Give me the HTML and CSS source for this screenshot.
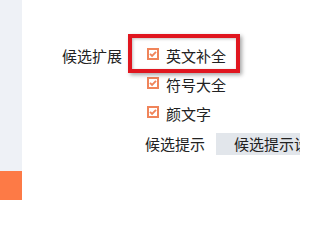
FILE: index.html
```html
<!DOCTYPE html>
<html lang="zh">
<head>
<meta charset="utf-8">
<link rel="stylesheet" href="styles.css">
</head>
<body>
<div class="page">
  <aside class="sidebar">
    <div class="sidebar-fill"></div>
    <div class="sidebar-active"></div>
  </aside>
  <main class="main">
    <div class="row">
      <span class="label">候选扩展</span>
      <span class="check"><svg width="12" height="12" viewBox="0 0 12 12"><rect x="1" y="1" width="10" height="10" fill="#fff" stroke="#f0845a" stroke-width="2"/><polyline points="3,5.8 5.1,7.9 9,3.9" fill="none" stroke="#f0845a" stroke-width="1.9"/></svg></span>
      <span class="text">英文补全</span>
    </div>
    <div class="row indent">
      <span class="check"><svg width="12" height="12" viewBox="0 0 12 12"><rect x="1" y="1" width="10" height="10" fill="#fff" stroke="#f0845a" stroke-width="2"/><polyline points="3,5.8 5.1,7.9 9,3.9" fill="none" stroke="#f0845a" stroke-width="1.9"/></svg></span>
      <span class="text">符号大全</span>
    </div>
    <div class="row indent">
      <span class="check"><svg width="12" height="12" viewBox="0 0 12 12"><rect x="1" y="1" width="10" height="10" fill="#fff" stroke="#f0845a" stroke-width="2"/><polyline points="3,5.8 5.1,7.9 9,3.9" fill="none" stroke="#f0845a" stroke-width="1.9"/></svg></span>
      <span class="text">颜文字</span>
    </div>
    <div class="row hint-row">
      <span class="hint-label">候选提示</span>
      <span class="button">候选提示设置</span>
    </div>
    <div class="highlight"></div>
  </main>
</div>
</body>
</html>
```

FILE: styles.css
```css
html, body {
  margin: 0;
  padding: 0;
  width: 300px;
  height: 200px;
  overflow: hidden;
  background: #ffffff;
}

.page {
  display: flex;
  width: 300px;
  height: 200px;
  font-family: "Noto Sans CJK SC", "Noto Sans", sans-serif;
  font-size: 15px;
  color: #222222;
}

.sidebar {
  width: 22px;
  flex: none;
  display: flex;
  flex-direction: column;
  background: #eef1f6;
}

.sidebar-fill {
  flex: 1;
}

.sidebar-active {
  height: 29px;
  background: #fd7a46;
}

.main {
  position: relative;
  flex: 1;
  min-width: 0;
  overflow: hidden;
  padding: 41px 0 0 40px;
  white-space: nowrap;
}

.row {
  display: flex;
  align-items: center;
  height: 29px;
}

.label {
  width: 85px;
  line-height: 29px;
}

.indent {
  padding-left: 85px;
}

.check {
  display: flex;
  width: 12px;
  height: 12px;
  margin-bottom: 3px;
}

.text {
  margin-left: 7px;
  line-height: 29px;
}

.hint-row {
  margin-top: 5px;
  height: 22px;
  padding-left: 83px;
}

.hint-label {
  line-height: 22px;
}

.button {
  margin-left: 11px;
  height: 22px;
  line-height: 22px;
  padding-left: 18px;
  padding-right: 20px;
  background: #e2e6eb;
  color: #222222;
}

.highlight {
  position: absolute;
  left: 106px;
  top: 34px;
  width: 104px;
  height: 31px;
  border: 4px solid #e0161f;
  box-shadow: 2px 2px 4px rgba(0, 0, 0, 0.35), inset 1px 1px 3px rgba(0, 0, 0, 0.25);
}
```
